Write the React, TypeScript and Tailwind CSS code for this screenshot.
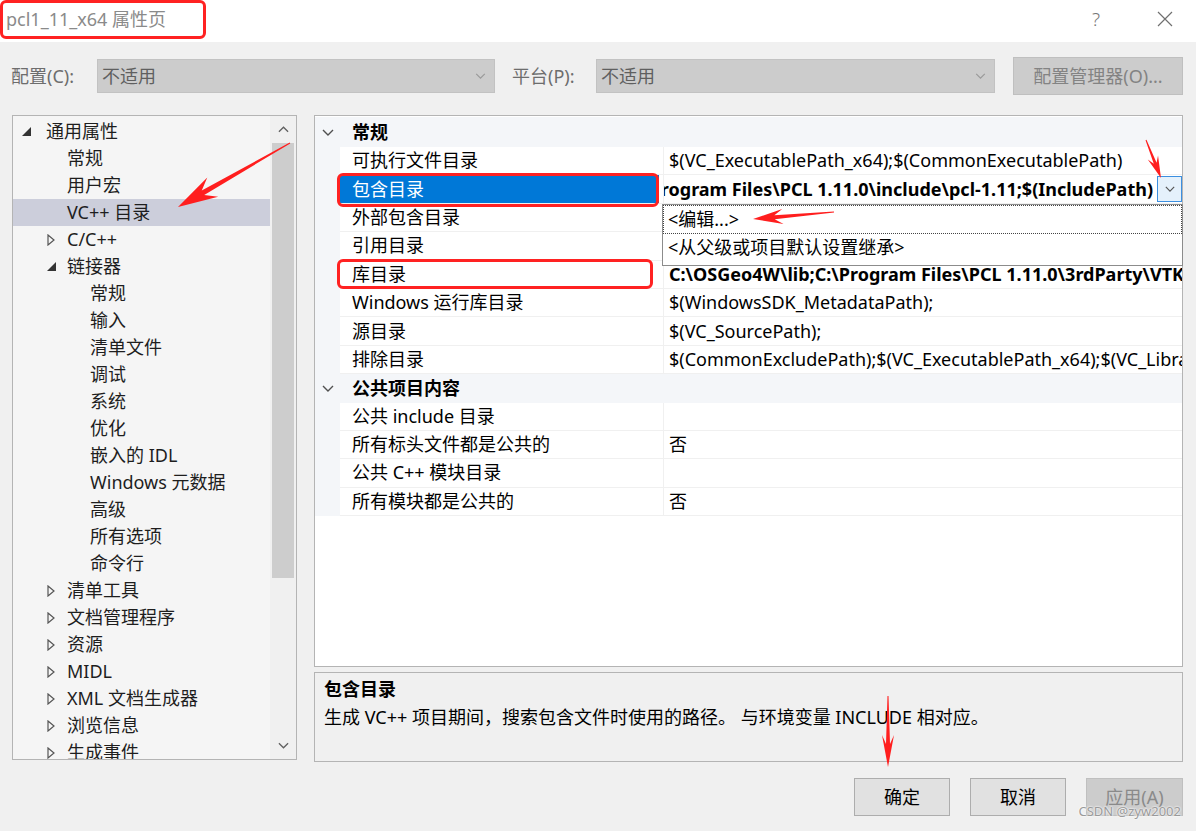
import React from 'react';

type TreeNode = { label: string; level: 0 | 1 | 2; exp?: 'open' | 'closed'; selected?: boolean };

const tree: TreeNode[] = [
  { label: '通用属性', level: 0, exp: 'open' },
  { label: '常规', level: 1 },
  { label: '用户宏', level: 1 },
  { label: 'VC++ 目录', level: 1, selected: true },
  { label: 'C/C++', level: 1, exp: 'closed' },
  { label: '链接器', level: 1, exp: 'open' },
  { label: '常规', level: 2 },
  { label: '输入', level: 2 },
  { label: '清单文件', level: 2 },
  { label: '调试', level: 2 },
  { label: '系统', level: 2 },
  { label: '优化', level: 2 },
  { label: '嵌入的 IDL', level: 2 },
  { label: 'Windows 元数据', level: 2 },
  { label: '高级', level: 2 },
  { label: '所有选项', level: 2 },
  { label: '命令行', level: 2 },
  { label: '清单工具', level: 1, exp: 'closed' },
  { label: '文档管理程序', level: 1, exp: 'closed' },
  { label: '资源', level: 1, exp: 'closed' },
  { label: 'MIDL', level: 1, exp: 'closed' },
  { label: 'XML 文档生成器', level: 1, exp: 'closed' },
  { label: '浏览信息', level: 1, exp: 'closed' },
  { label: '生成事件', level: 1, exp: 'closed' },
];

const indent = { 0: 'w-[9px]', 1: 'w-[34px]', 2: 'w-[57px]' };
const expBox = { 0: 'w-[24px]', 1: 'w-[20px]', 2: 'w-[20px]' };

type Row =
  | { kind: 'cat'; name: string; first?: boolean }
  | { kind: 'prop'; name: string; value?: string; bold?: boolean; selected?: boolean };

const rows: Row[] = [
  { kind: 'cat', name: '常规', first: true },
  { kind: 'prop', name: '可执行文件目录', value: '$(VC_ExecutablePath_x64);$(CommonExecutablePath)' },
  {
    kind: 'prop',
    name: '包含目录',
    value: 'C:\\OSGeo4W\\include;C:\\Program Files\\PCL 1.11.0\\include\\pcl-1.11;$(IncludePath)',
    bold: true,
    selected: true,
  },
  { kind: 'prop', name: '外部包含目录', value: '$(VC_IncludePath);$(WindowsSDK_IncludePath);' },
  { kind: 'prop', name: '引用目录', value: '$(VC_ReferencesPath_x64);' },
  {
    kind: 'prop',
    name: '库目录',
    value: 'C:\\OSGeo4W\\lib;C:\\Program Files\\PCL 1.11.0\\3rdParty\\VTK\\lib;$(LibraryPath)',
    bold: true,
  },
  { kind: 'prop', name: 'Windows 运行库目录', value: '$(WindowsSDK_MetadataPath);' },
  { kind: 'prop', name: '源目录', value: '$(VC_SourcePath);' },
  { kind: 'prop', name: '排除目录', value: '$(CommonExcludePath);$(VC_ExecutablePath_x64);$(VC_LibraryPath_x64)' },
  { kind: 'cat', name: '公共项目内容' },
  { kind: 'prop', name: '公共 include 目录' },
  { kind: 'prop', name: '所有标头文件都是公共的', value: '否' },
  { kind: 'prop', name: '公共 C++ 模块目录' },
  { kind: 'prop', name: '所有模块都是公共的', value: '否' },
];

function Chev({ up, className }: { up?: boolean; className?: string }) {
  return (
    <svg viewBox="0 0 12 7" className={className}>
      <path d={up ? 'M1 6L6 1L11 6' : 'M1 1L6 6L11 1'} fill="none" stroke="currentColor" strokeWidth="1.4" />
    </svg>
  );
}

function Expander({ exp }: { exp?: 'open' | 'closed' }) {
  if (exp === 'open')
    return (
      <svg width="9" height="9" viewBox="0 0 9 9">
        <path d="M9 0V9H0Z" fill="#333" />
      </svg>
    );
  if (exp === 'closed')
    return (
      <svg width="8" height="12" viewBox="0 0 8 12">
        <path d="M1 1L7 6L1 11Z" fill="none" stroke="#555" strokeWidth="1.2" />
      </svg>
    );
  return null;
}

// tapered red annotation arrow, tail -> tip
function arrow(tx: number, ty: number, px: number, py: number, hl: number, hw: number, w0: number, w1: number) {
  const dx = px - tx;
  const dy = py - ty;
  const len = Math.hypot(dx, dy);
  const ux = dx / len;
  const uy = dy / len;
  const nx = -uy;
  const ny = ux;
  const nX = px - ux * hl * 0.72;
  const nY = py - uy * hl * 0.72;
  const wX = px - ux * hl;
  const wY = py - uy * hl;
  const pts = [
    [tx + (nx * w0) / 2, ty + (ny * w0) / 2],
    [nX + (nx * w1) / 2, nY + (ny * w1) / 2],
    [wX + (nx * hw) / 2, wY + (ny * hw) / 2],
    [px, py],
    [wX - (nx * hw) / 2, wY - (ny * hw) / 2],
    [nX - (nx * w1) / 2, nY - (ny * w1) / 2],
    [tx - (nx * w0) / 2, ty - (ny * w0) / 2],
  ];
  return pts.map((p) => p.join(',')).join(' ');
}

function TreePanel() {
  return (
    <div className="w-[285px] h-[645px] border border-[#b4b4b4] bg-[#f5f5f5] flex shrink-0">
      <div className="flex-1 overflow-hidden pt-[2px] text-[#1e1e1e]">
        {tree.map((n, i) => (
          <div key={i} className={`flex items-center h-[27px] ${n.selected ? 'bg-[#cccedb]' : ''}`}>
            <div className={`${indent[n.level]} shrink-0`} />
            <div className={`${expBox[n.level]} shrink-0 flex items-center`}>
              <Expander exp={n.exp} />
            </div>
            <span className="whitespace-nowrap">{n.label}</span>
          </div>
        ))}
      </div>
      <div className="w-[26px] flex flex-col bg-[#f0f0f0]">
        <div className="h-[27px] flex items-center justify-center text-[#606060]">
          <Chev up className="w-[11px] h-[7px]" />
        </div>
        <div className="flex-1">
          <div className="h-[435px] mx-[2px] bg-[#cdcdcd]" />
        </div>
        <div className="h-[28px] flex items-center justify-center text-[#606060]">
          <Chev className="w-[11px] h-[7px]" />
        </div>
      </div>
    </div>
  );
}

function PropGrid() {
  return (
    <div className="w-[869px] h-[552px] border border-[#b4b4b4] bg-white relative">
      <div className="pt-[1px]">
        {rows.map((r, i) =>
          r.kind === 'cat' ? (
            <div
              key={i}
              className={`flex items-center bg-[#f4f6f9] ${r.first ? 'h-[30px]' : 'h-[28.4px]'}`}
            >
              <div className="w-[25px] flex justify-center text-[#505050]">
                <Chev className="w-[12px] h-[7px]" />
              </div>
              <span className="pl-[12px] font-bold text-black">{r.name}</span>
            </div>
          ) : (
            <div key={i} className="flex h-[28.4px]">
              <div className="w-[25px] shrink-0 bg-[#f4f6f9]" />
              {r.selected ? (
                <div className="w-[323px] shrink-0 flex items-center pr-[4px] border-b border-[#f0f0f0]">
                  <div className="flex-1 h-full flex items-center pl-[12px] bg-[#0078d7] text-white">{r.name}</div>
                </div>
              ) : (
                <div className="w-[323px] shrink-0 flex items-center pl-[12px] border-b border-[#f0f0f0] text-black">
                  {r.name}
                </div>
              )}
              {r.selected ? (
                <div className="flex-1 min-w-0 flex items-center border-l border-b border-[#f0f0f0]">
                  <div className="flex-1 min-w-0 overflow-hidden flex justify-end pr-[4px]">
                    <span className="whitespace-nowrap font-bold text-black">{r.value}</span>
                  </div>
                  <div className="w-[25px] h-[26px] shrink-0 border border-[#3c8fe0] bg-[#e5f1fb] flex items-center justify-center text-[#555]">
                    <Chev className="w-[10px] h-[6px]" />
                  </div>
                </div>
              ) : (
                <div
                  className={`flex-1 min-w-0 overflow-hidden whitespace-nowrap flex items-center pl-[5px] border-l border-b border-[#f0f0f0] text-black ${
                    r.bold ? 'font-bold' : ''
                  }`}
                >
                  {r.value}
                </div>
              )}
            </div>
          )
        )}
      </div>

      {/* open dropdown of 包含目录 */}
      <div className="absolute left-[347px] top-[88px] w-[521px] h-[62px] bg-white border border-[#8c8c8c] text-black">
        <div className="h-[29px] flex items-center pl-[4px] border border-dotted border-[#444]">&lt;编辑...&gt;</div>
        <div className="h-[27px] flex items-center pl-[5px]">&lt;从父级或项目默认设置继承&gt;</div>
      </div>
    </div>
  );
}

export default function App() {
  return (
    <div className="relative w-[1196px] h-[831px] overflow-hidden bg-[#f0f0f0] text-[18px] font-['Noto_Sans','Noto_Sans_CJK_SC',sans-serif]">
      {/* title bar */}
      <div className="h-[42px] bg-white flex items-start">
        <div className="w-[206px] h-[39px] border-[3px] border-[#ff2222] rounded-[6px] flex items-center pl-[3px] text-[#8a8a8a]">
          pcl1_11_x64 属性页
        </div>
        <div className="ml-auto h-[38px] flex items-center pr-[23px] text-[#777]">
          <span className="mr-[57px] text-[19px] font-light">?</span>
          <svg width="16" height="16" viewBox="0 0 16 16">
            <path d="M1 1L15 15M15 1L1 15" stroke="#707070" strokeWidth="1.2" />
          </svg>
        </div>
      </div>

      {/* config row */}
      <div className="h-[68px] flex items-center pl-[11px] text-[#6d6d6d]">
        <span className="w-[86px]">配置(C):</span>
        <div className="w-[398px] h-[34px] bg-[#cccccc] border border-[#c2c2c2] flex items-center pl-[4px] pr-[8px] text-[#5f5f5f]">
          <span className="flex-1">不适用</span>
          <Chev className="w-[11px] h-[6px] text-[#9a9a9a]" />
        </div>
        <span className="ml-[17px] w-[84px]">平台(P):</span>
        <div className="w-[399px] h-[34px] bg-[#cccccc] border border-[#c2c2c2] flex items-center pl-[4px] pr-[8px] text-[#5f5f5f]">
          <span className="flex-1">不适用</span>
          <Chev className="w-[11px] h-[6px] text-[#9a9a9a]" />
        </div>
        <div className="ml-[18px] w-[170px] h-[38px] bg-[#cccccc] border border-[#bfbfbf] flex items-center justify-center text-[#838383]">
          配置管理器(O)...
        </div>
      </div>

      {/* main */}
      <div className="mt-[5px] flex pl-[12px] gap-[17px]">
        <TreePanel />
        <div className="flex flex-col gap-[5px]">
          <PropGrid />
          <div className="w-[869px] h-[90px] border border-[#b4b4b4] bg-[#f0f0f0] pl-[9px] pt-[3px] text-black">
            <div className="h-[27px] flex items-center font-bold">包含目录</div>
            <div className="h-[29px] flex items-center">
              生成 VC++ 项目期间，搜索包含文件时使用的路径。 与环境变量 INCLUDE 相对应。
            </div>
          </div>
        </div>
      </div>

      {/* buttons */}
      <div className="mt-[16px] flex justify-end pr-[13px] gap-[20px]">
        <div className="w-[96px] h-[38px] bg-[#e1e1e1] border border-[#adadad] flex items-center justify-center text-black">确定</div>
        <div className="w-[96px] h-[38px] bg-[#e1e1e1] border border-[#adadad] flex items-center justify-center text-black">取消</div>
        <div className="w-[97px] h-[38px] bg-[#cccccc] border border-[#bfbfbf] flex items-center justify-center text-[#8a8a8a]">应用(A)</div>
      </div>

      {/* annotations */}
      <div className="absolute left-[337px] top-[173px] w-[322px] h-[34px] border-[3px] border-[#ff2222] rounded-[6px]" />
      <div className="absolute left-[337px] top-[259px] w-[316px] h-[30px] border-[3px] border-[#ff2222] rounded-[6px]" />
      <svg className="absolute inset-0 pointer-events-none" width="1196" height="831">
        <polygon points={arrow(290, 143, 178, 207, 40, 22, 1, 5)} fill="#ff1e1e" />
        <polygon points={arrow(1146, 140, 1161, 178, 22, 11, 1, 3)} fill="#ff1e1e" />
        <polygon points={arrow(834, 212, 753, 219, 30, 15, 1, 4)} fill="#ff1e1e" />
        <polygon points={arrow(888, 696, 888, 767, 32, 12, 1, 4)} fill="#ff1e1e" />
      </svg>
      <div className="absolute right-[15px] bottom-[10px] text-[13px] text-[#9a9a9a] [text-shadow:0_0_2px_#fff,0_0_2px_#fff]">
        CSDN @zyw2002
      </div>
    </div>
  );
}
